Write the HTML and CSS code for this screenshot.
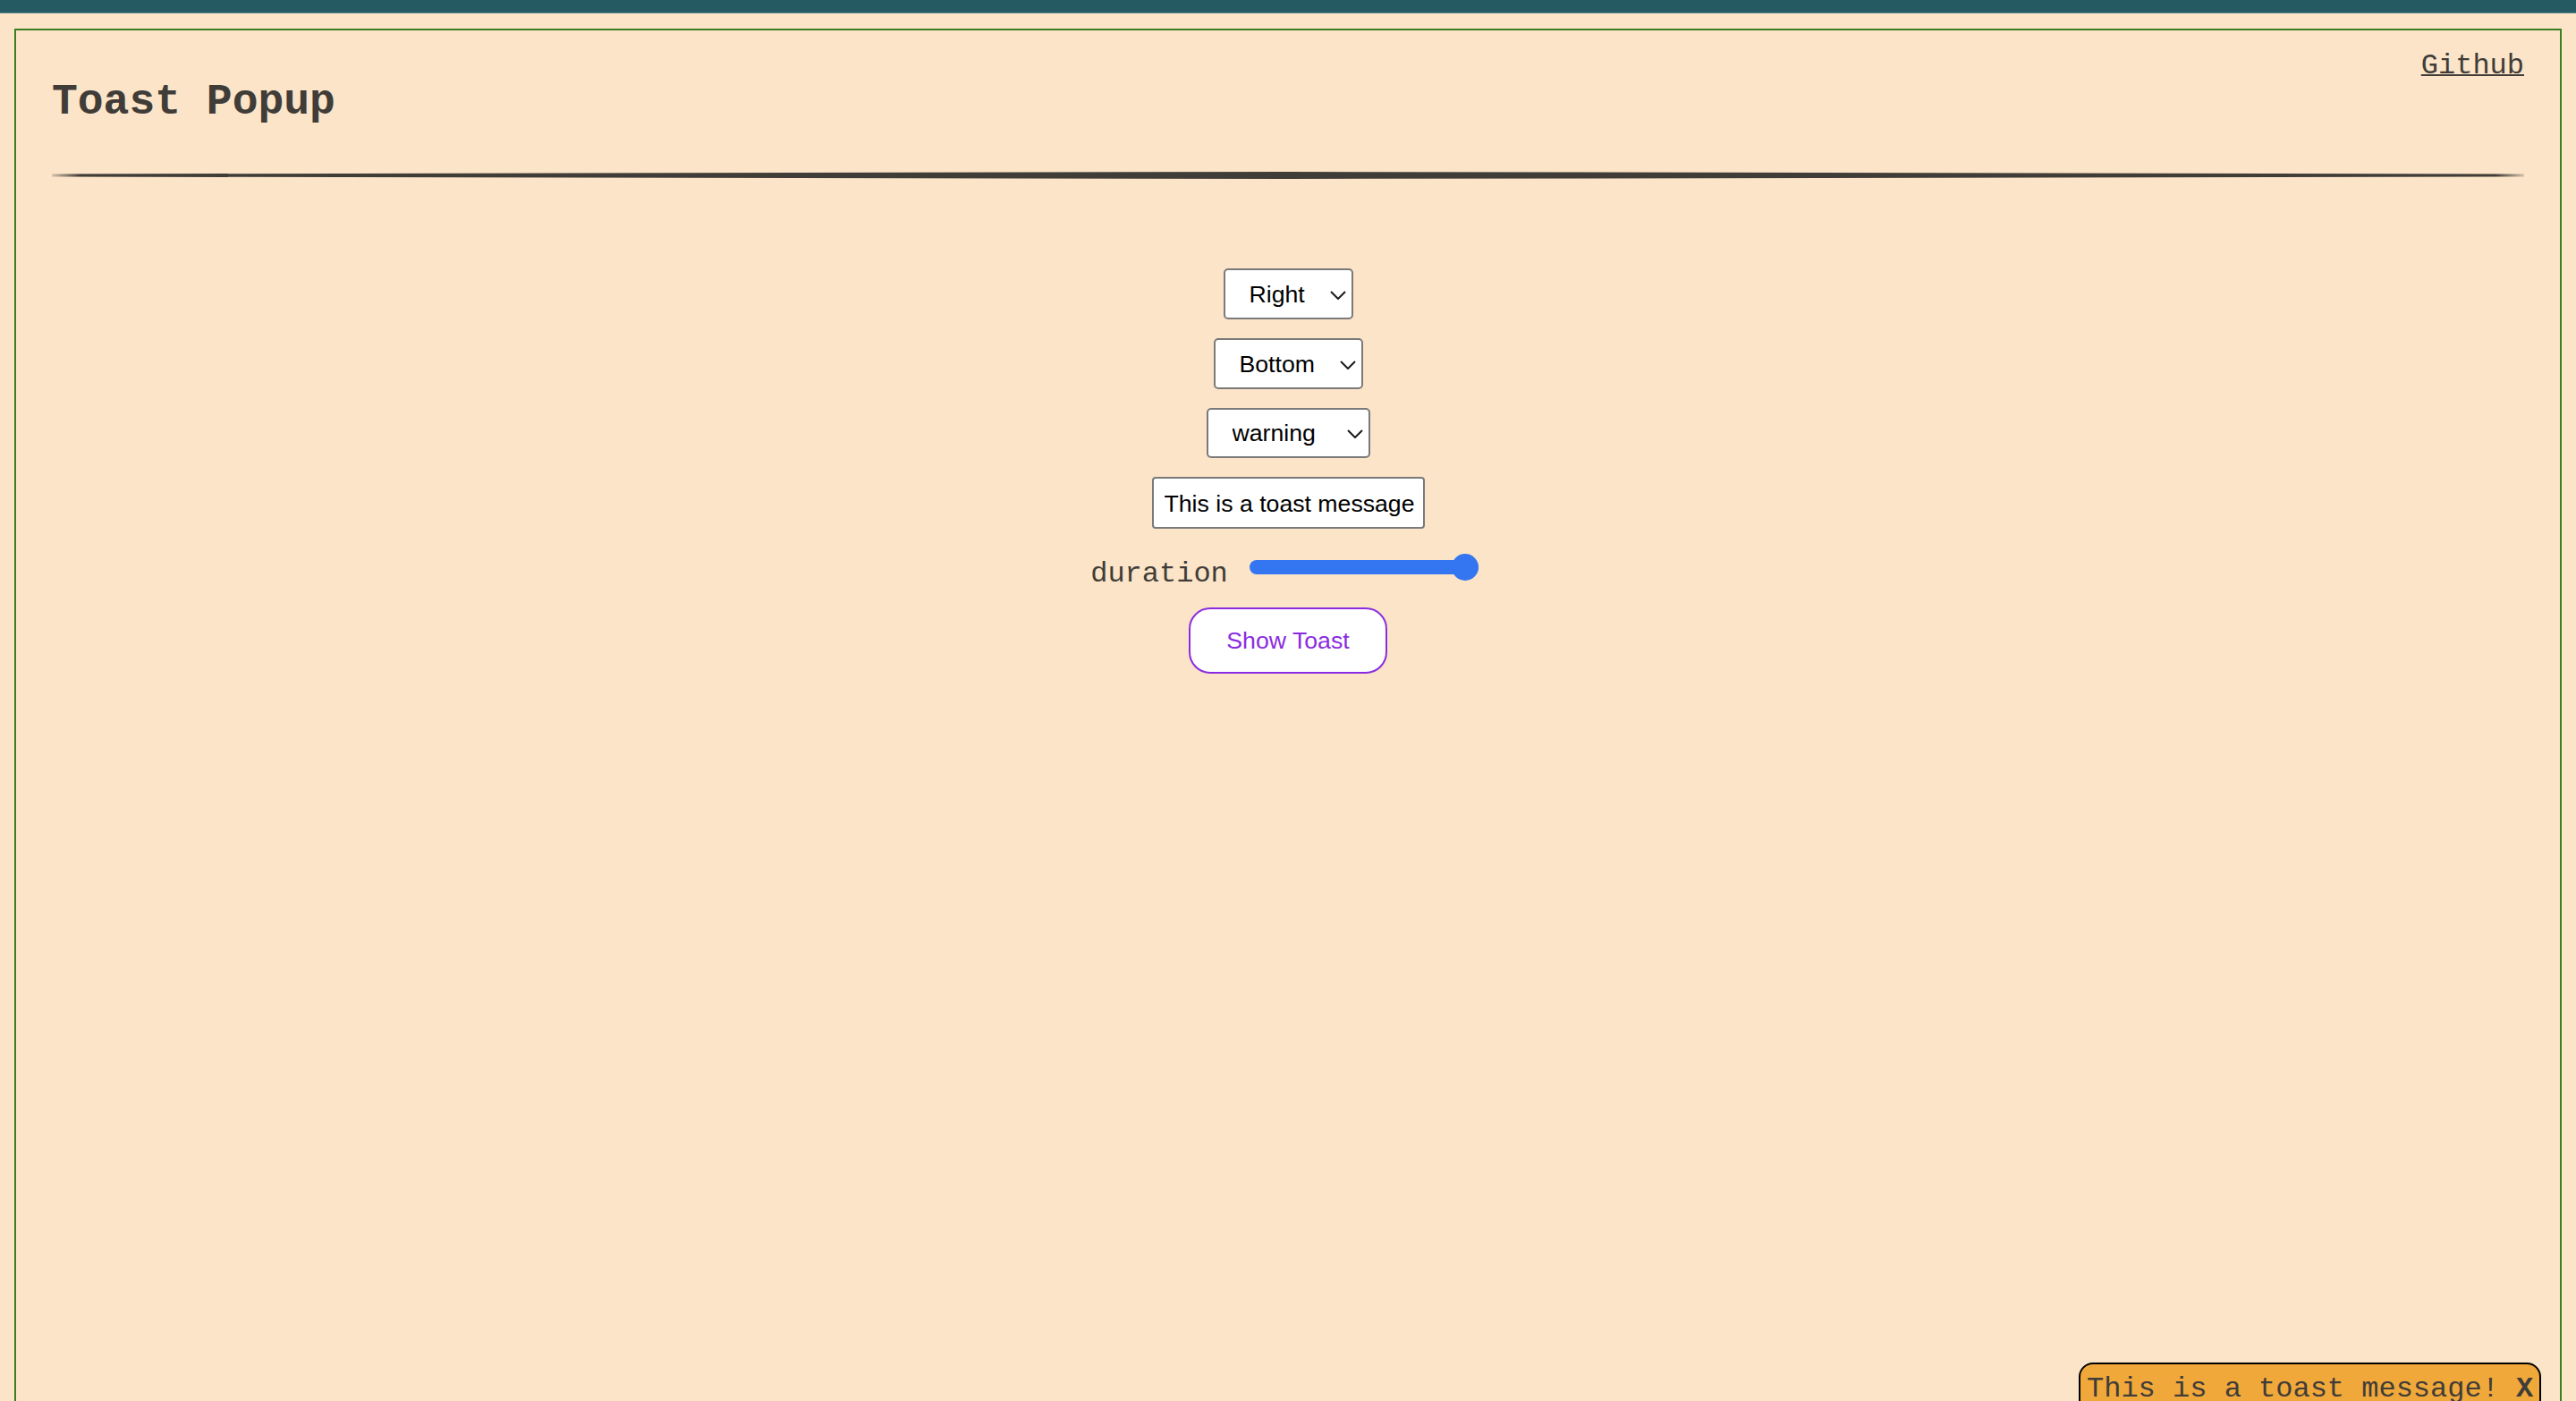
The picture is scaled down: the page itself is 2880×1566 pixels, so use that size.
FILE: index.html
```html
<!DOCTYPE html>
<html lang="en">
<head>
<meta charset="utf-8">
<title>Toast Popup</title>
<link rel="stylesheet" href="styles.css">
</head>
<body>
<div class="topbar"></div>
<div class="page">
  <header class="header">
    <h1 class="title">Toast Popup</h1>
    <a class="github" href="#">Github</a>
  </header>
  <div class="rule"></div>
  <main class="controls">
    <div class="select-wrap sel-position">
      <select class="select">
        <option>Left</option>
        <option>Center</option>
        <option selected>Right</option>
      </select>
      <svg class="chev" width="18" height="10" viewBox="0 0 18 10"><polyline points="1,1 9,9 17,1" fill="none" stroke="#1a1a1a" stroke-width="2"/></svg>
    </div>
    <div class="select-wrap sel-vertical">
      <select class="select">
        <option>Top</option>
        <option selected>Bottom</option>
      </select>
      <svg class="chev" width="18" height="10" viewBox="0 0 18 10"><polyline points="1,1 9,9 17,1" fill="none" stroke="#1a1a1a" stroke-width="2"/></svg>
    </div>
    <div class="select-wrap sel-type">
      <select class="select">
        <option>success</option>
        <option>info</option>
        <option selected>warning</option>
        <option>error</option>
      </select>
      <svg class="chev" width="18" height="10" viewBox="0 0 18 10"><polyline points="1,1 9,9 17,1" fill="none" stroke="#1a1a1a" stroke-width="2"/></svg>
    </div>
    <input class="text-input" type="text" value="This is a toast message">
    <div class="duration-row">
      <label class="duration-label">duration</label>
      <input class="slider" type="range" min="0" max="100" value="100">
    </div>
    <button class="show-btn">Show Toast</button>
  </main>
</div>
<div class="toast"><span class="toast-msg">This is a toast message!</span> <span class="toast-close">X</span></div>
</body>
</html>
```

FILE: styles.css
```css
html, body {
  margin: 0;
  padding: 0;
  overflow: hidden;
}

body {
  background: #fbe4c7;
  color: #403c38;
  font-family: "Courier New", "Liberation Mono", monospace;
  font-size: 32px;
}

.topbar {
  height: 14px;
  background: #265a63;
  border-bottom: 1px solid #5d8a8f;
}

.page {
  margin: 17px 16px 0;
  border: 2px solid #3a7d22;
  padding: 0 40px;
  height: 1700px;
}

.header {
  display: flex;
  justify-content: space-between;
  align-items: flex-start;
}

.title {
  margin: 53px 0 0;
  font-size: 48px;
  font-weight: bold;
  line-height: normal;
  color: #403c38;
}

.github {
  margin-top: 21px;
  font-size: 32px;
  color: #403c38;
  text-decoration: underline;
  text-decoration-thickness: 2px;
}

.rule {
  margin-top: 51px;
  height: 8px;
  background: linear-gradient(to right, rgba(64, 60, 56, 0.2), #403c38 32px, #403c38 calc(100% - 32px), rgba(64, 60, 56, 0.2));
  clip-path: polygon(0 31%, 50% 0, 100% 31%, 100% 69%, 50% 100%, 0 69%);
}

.controls {
  margin-top: 100px;
  display: flex;
  flex-direction: column;
  align-items: center;
  gap: 21px;
}

.select-wrap {
  position: relative;
  height: 57px;
}

.sel-position { width: 145px; }
.sel-vertical { width: 167px; }
.sel-type { width: 183px; height: 56px; }

.select {
  -webkit-appearance: none;
  appearance: none;
  box-sizing: border-box;
  width: 100%;
  height: 100%;
  margin: 0;
  padding: 0 0 0 27px;
  border: 2px solid #7a7a7a;
  border-radius: 5px;
  background: #fff;
  color: #000;
  font-family: "Liberation Sans", Arial, Helvetica, sans-serif;
  font-size: 26.67px;
}

.chev {
  position: absolute;
  right: 8px;
  top: 50%;
  margin-top: -4px;
  pointer-events: none;
}

.text-input {
  box-sizing: border-box;
  width: 305px;
  height: 58px;
  margin: 0;
  padding: 3px 10px 0 12px;
  border: 2px solid #7a7a7a;
  border-radius: 4px;
  background: #fff;
  color: #000;
  font-family: "Liberation Sans", Arial, Helvetica, sans-serif;
  font-size: 26.67px;
}

.duration-row {
  display: flex;
  align-items: flex-start;
  gap: 24px;
  margin-right: 8px;
}

.duration-label {
  margin-top: 14px;
  font-size: 32px;
  line-height: 32px;
  color: #403c38;
}

.slider {
  -webkit-appearance: none;
  appearance: none;
  width: 256px;
  height: 30px;
  margin: 7px 0 0;
  padding: 0;
  background: transparent;
}

.slider::-webkit-slider-runnable-track {
  height: 16px;
  background: #3476f1;
  border-radius: 8px;
}

.slider::-webkit-slider-thumb {
  -webkit-appearance: none;
  appearance: none;
  width: 30px;
  height: 30px;
  border-radius: 50%;
  background: #3476f1;
  border: none;
  margin-top: -7px;
}

.show-btn {
  box-sizing: border-box;
  width: 222px;
  height: 74px;
  margin: 0;
  padding: 0;
  border: 2px solid #8a2be2;
  border-radius: 24px;
  background: #fff;
  color: #8a2be2;
  font-family: "Liberation Sans", Arial, Helvetica, sans-serif;
  font-size: 26.67px;
}

.toast {
  position: fixed;
  left: 2324px;
  bottom: -15px;
  box-sizing: border-box;
  width: 517px;
  padding: 10px 7px 8px;
  border: 2px solid #000;
  border-radius: 16px;
  background: #f0a83a;
  color: #403c38;
  font-size: 32px;
  line-height: 36px;
  white-space: nowrap;
}

.toast-close {
  font-weight: bold;
}
```
